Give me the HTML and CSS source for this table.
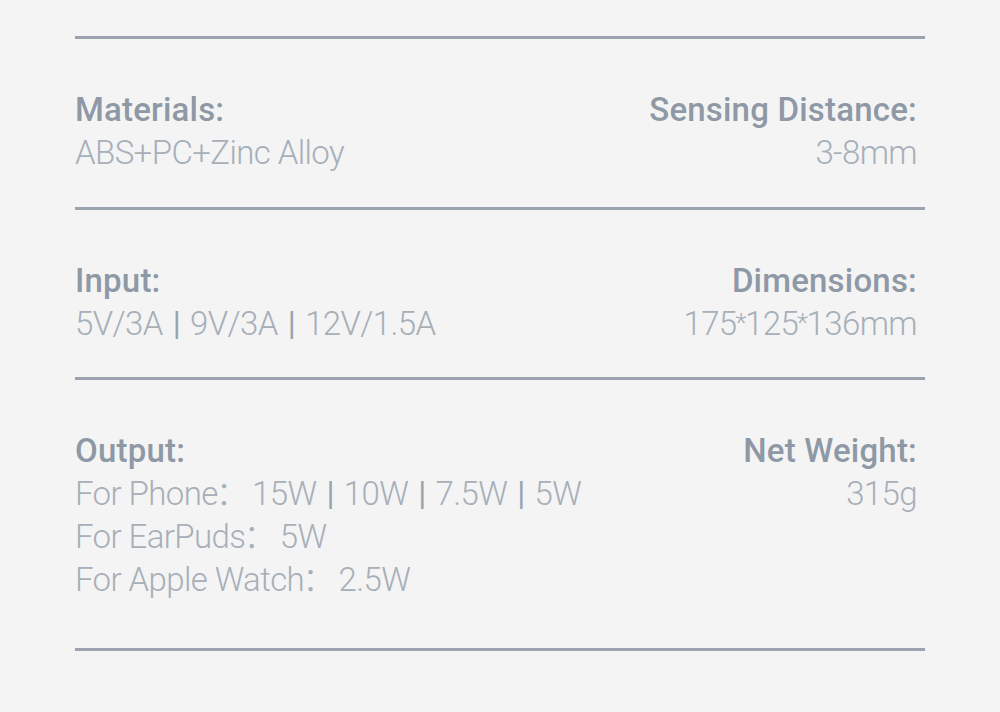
FILE: index.html
```html
<!DOCTYPE html>
<html>
<head>
<meta charset="utf-8">
<link rel="stylesheet" href="styles.css">
</head>
<body>
<div class="specs">
  <div class="row">
    <div class="cell">
      <div class="label">Materials:</div>
      <div class="value">ABS+PC+Zinc Alloy</div>
    </div>
    <div class="cell right">
      <div class="label">Sensing Distance:</div>
      <div class="value">3-8mm</div>
    </div>
  </div>
  <div class="row">
    <div class="cell">
      <div class="label">Input:</div>
      <div class="value">5V/3A <span class="sep">|</span> 9V/3A <span class="sep">|</span> 12V/1.5A</div>
    </div>
    <div class="cell right">
      <div class="label">Dimensions:</div>
      <div class="value">175<span class="ast">*</span>125<span class="ast">*</span>136mm</div>
    </div>
  </div>
  <div class="row last">
    <div class="cell">
      <div class="label">Output:</div>
      <div class="value">For Phone<span class="colon">：</span>15W <span class="sep">|</span> 10W <span class="sep">|</span> 7.5W <span class="sep">|</span> 5W</div>
      <div class="value">For EarPuds<span class="colon">：</span>5W</div>
      <div class="value">For Apple Watch<span class="colon">：</span>2.5W</div>
    </div>
    <div class="cell right">
      <div class="label">Net Weight:</div>
      <div class="value">315g</div>
    </div>
  </div>
</div>
</body>
</html>
```
FILE: styles.css
```css
html, body {
  margin: 0;
  padding: 0;
  background: #f4f4f4;
}
body {
  font-family: Roboto, "Noto Sans CJK SC", sans-serif;
  width: 1000px;
  height: 712px;
  overflow: hidden;
}
.specs {
  margin: 36px 75px 0 75px;
  width: 850px;
}
.row {
  display: flex;
  justify-content: space-between;
  border-top: 3px solid #9ba4ae;
  padding: 49px 8px 32.5px 0;
}
.row.last {
  border-bottom: 3px solid #9ba4ae;
  padding-bottom: 47px;
}
.cell {
  display: flex;
  flex-direction: column;
}
.cell.right {
  align-items: flex-end;
}
.label {
  font-size: 33px;
  line-height: 43px;
  font-weight: 500;
  letter-spacing: 0.2px;
  color: #8e99a5;
}
.value {
  font-size: 33px;
  line-height: 43px;
  font-weight: 300;
  letter-spacing: -0.6px;
  color: #a7afb8;
  white-space: nowrap;
}
.sep {
  font-weight: 400;
  color: #99a3ad;
  margin: 0 2.5px;
}
.ast {
  font-size: 26px;
  vertical-align: 3px;
  margin: 0 -1px;
}
.colon {
  margin: 0 4px 0 -2px;
}
```
